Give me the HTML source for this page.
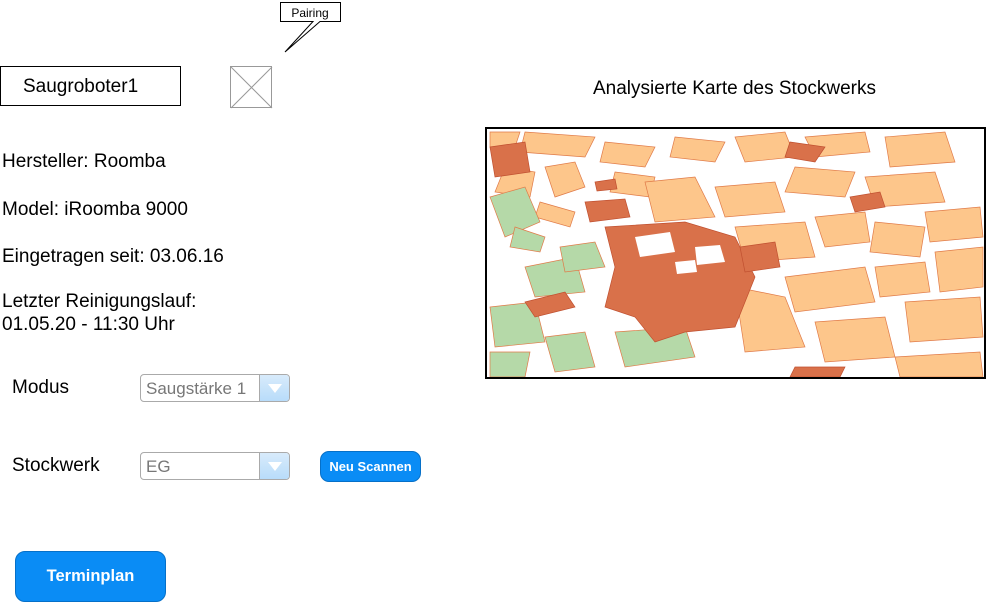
<!DOCTYPE html>
<html><head><meta charset="utf-8"><style>
body{margin:0;width:986px;height:602px;background:#fff;font-family:"Liberation Sans",sans-serif;position:relative;overflow:hidden}
.a{position:absolute}
.t{font-size:19px;color:#000}
.sel{position:absolute;width:150px;height:28px;border:1px solid #aaa;border-radius:4px;background:#fff;box-sizing:border-box}
.sel span{position:absolute;left:5px;top:4px;font-size:17px;color:#777}
.sel i{position:absolute;right:0;top:0;width:29px;height:26px;background:linear-gradient(#d8ebfb,#b8dcfa);border-left:1px solid #aaa;border-radius:0 3px 3px 0}
.sel i:after{content:"";position:absolute;left:8px;top:9px;border-left:7px solid transparent;border-right:7px solid transparent;border-top:9px solid #fff}
</style></head><body>
<div class="a" style="left:0;top:66px;width:179px;height:38px;border:1px solid #000"></div>
<div class="a t" style="left:23px;top:76px">Saugroboter1</div>
<svg class="a" style="left:230px;top:66px" width="43" height="43"><rect x="0.5" y="0.5" width="41" height="41" fill="#fff" stroke="#999"/><path d="M1 1L42 42M42 1L1 42" stroke="#999"/></svg>
<svg class="a" style="left:280px;top:2px" width="65" height="52"><path d="M0.5 0.5H60.5V19.5H40L5 50L33 19.5H0.5Z" fill="#fff" stroke="#000"/><text x="30" y="15" font-size="12" text-anchor="middle" font-family="Liberation Sans">Pairing</text></svg>
<div class="a t" style="left:2px;top:151px">Hersteller: Roomba</div>
<div class="a t" style="left:2px;top:199px">Model: iRoomba 9000</div>
<div class="a t" style="left:2px;top:246px">Eingetragen seit: 03.06.16</div>
<div class="a t" style="left:2px;top:290px;line-height:23px">Letzter Reinigungslauf:<br>01.05.20 - 11:30 Uhr</div>
<div class="a t" style="left:12px;top:377px">Modus</div>
<div class="sel" style="left:140px;top:374px"><span>Saugstärke 1</span><i></i></div>
<div class="a t" style="left:12px;top:455px">Stockwerk</div>
<div class="sel" style="left:140px;top:452px"><span>EG</span><i></i></div>
<div class="a" style="left:320px;top:451px;width:101px;height:31px;background:#0a8cf5;border:1px solid #0670c8;border-radius:9px;box-sizing:border-box;color:#fff;font-weight:bold;font-size:13px;text-align:center;line-height:29px">Neu Scannen</div>
<div class="a" style="left:15px;top:551px;width:151px;height:51px;background:#0a8cf5;border:1px solid #0670c8;border-radius:10px;box-sizing:border-box;color:#fff;font-weight:bold;font-size:16.5px;text-align:center;line-height:49px">Terminplan</div>
<div class="a" style="left:593px;top:78px;font-size:19px">Analysierte Karte des Stockwerks</div>
<svg class="a" style="left:485px;top:127px" width="501" height="252">
<rect x="1" y="1" width="499" height="250" fill="#fff"/>
<g fill="#fdc68b" stroke="#e07a48" stroke-width="0.7">
<path d="M40 5L110 10L100 30L35 25Z"/><path d="M60 40L90 35L100 60L70 70Z"/><path d="M120 15L170 20L160 40L115 35Z"/>
<path d="M130 45L170 50L165 70L125 65Z"/><path d="M190 10L240 15L230 35L185 30Z"/><path d="M160 55L210 50L230 90L170 95Z"/>
<path d="M250 10L300 5L310 30L260 35Z"/><path d="M230 60L290 55L300 85L240 90Z"/><path d="M310 40L370 45L360 70L300 65Z"/>
<path d="M320 10L380 5L385 25L330 30Z"/><path d="M400 10L460 5L470 35L405 40Z"/><path d="M380 50L450 45L460 75L390 80Z"/>
<path d="M440 85L495 80L498 110L445 115Z"/><path d="M250 100L320 95L330 130L260 135Z"/><path d="M330 90L380 85L385 115L340 120Z"/>
<path d="M390 95L440 100L435 130L385 125Z"/><path d="M300 150L380 140L390 175L310 185Z"/><path d="M390 140L440 135L445 165L395 170Z"/>
<path d="M420 175L495 170L498 210L425 215Z"/><path d="M330 195L400 190L410 230L340 235Z"/><path d="M250 160L300 170L320 220L260 225Z"/>
<path d="M410 230L495 225L498 250L415 250Z"/><path d="M450 125L498 120L498 160L455 165Z"/><path d="M20 40L50 45L45 70L10 65Z"/>
<path d="M55 75L90 85L85 100L50 90Z"/><path d="M140 160L190 150L200 175L150 180Z"/><path d="M5 5L35 5L30 20L5 20Z"/>
</g>
<g fill="#b5d9a8" stroke="#e07a48" stroke-width="0.7">
<path d="M5 70L40 60L55 95L20 110Z"/><path d="M40 140L90 130L100 165L50 170Z"/><path d="M75 120L110 115L120 140L80 145Z"/>
<path d="M5 180L50 175L60 215L10 220Z"/><path d="M130 205L200 200L210 230L140 240Z"/><path d="M60 210L100 205L110 240L70 245Z"/>
<path d="M5 225L45 225L40 250L5 250Z"/><path d="M30 100L60 110L55 125L25 120Z"/>
</g>
<g fill="#d9714a" stroke="#c05030" stroke-width="0.7">
<path d="M120 100L200 95L250 110L270 150L250 200L200 205L170 215L150 190L120 180L130 140Z"/>
<path d="M5 20L40 15L45 45L10 50Z"/><path d="M100 75L140 72L145 90L105 95Z"/><path d="M305 15L340 20L330 35L300 30Z"/>
<path d="M365 70L395 65L400 80L370 85Z"/><path d="M40 175L80 165L90 180L50 190Z"/><path d="M310 240L360 240L355 250L305 250Z"/>
<path d="M255 120L290 115L295 140L260 145Z"/><path d="M110 55L130 52L132 62L112 64Z"/>
</g>
<g fill="#fff"><path d="M150 110L185 105L190 125L155 130Z"/><path d="M210 120L235 118L240 135L212 138Z"/><path d="M190 135L210 133L212 145L192 147Z"/></g>
<rect x="1" y="1" width="499" height="250" fill="none" stroke="#000" stroke-width="2"/>
</svg>
</body></html>
